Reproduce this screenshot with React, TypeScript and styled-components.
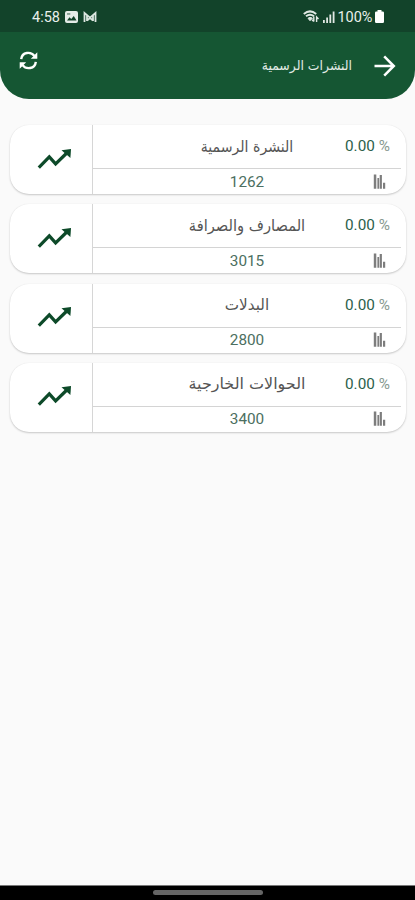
import React from 'react';
import styled, { createGlobalStyle } from 'styled-components';

const GlobalStyle = createGlobalStyle`
  * { box-sizing: border-box; }
  body { margin: 0; background: #fafafa; font-family: Roboto, "DejaVu Sans", sans-serif; }
`;

const Screen = styled.div`
  width: 415px;
  height: 900px;
  display: flex;
  flex-direction: column;
  overflow: hidden;
  background: #fafafa;
`;

const StatusBar = styled.div`
  height: 32px;
  flex: none;
  display: flex;
  align-items: center;
  justify-content: space-between;
  padding: 1px 31px 0 32px;
  background: #12432a;
  color: #e9f0ec;
  font-size: 14.5px;
`;

const StatusGroup = styled.div<{ $gap: number }>`
  display: flex;
  align-items: center;
  gap: ${(p) => p.$gap}px;
  svg { display: block; }
  span { padding-top: 1px; }
`;

const Header = styled.header`
  height: 67px;
  flex: none;
  display: flex;
  align-items: flex-start;
  padding: 0 19px;
  background: #155633;
  border-radius: 0 0 29px 29px;
`;

const IconButton = styled.button<{ $top: number }>`
  flex: none;
  margin: ${(p) => p.$top}px 0 0;
  padding: 0;
  border: 0;
  background: none;
  color: #fff;
  svg { display: block; }
`;

const Title = styled.h1`
  flex: 1;
  margin: 24px 22px 0 0;
  font-family: "DejaVu Sans", sans-serif;
  font-size: 13px;
  line-height: 20px;
  font-weight: 400;
  text-align: right;
  color: #e3ece6;
  white-space: nowrap;
  transform: scaleX(0.957);
  transform-origin: right center;
`;

const List = styled.main`
  flex: 1;
  display: flex;
  flex-direction: column;
  gap: 10.3px;
  padding: 26px 9px 0 10px;
`;

const Card = styled.article`
  height: 69px;
  flex: none;
  display: flex;
  background: #fff;
  border-radius: 19px;
  box-shadow: 0 1px 2px rgba(0, 0, 0, 0.2), 0 0 1px rgba(0, 0, 0, 0.08);
`;

const TrendCell = styled.div`
  width: 83px;
  flex: none;
  display: flex;
  align-items: center;
  padding: 0 0 2px 27px;
  border-right: 1px solid #d6d6d6;
`;

const Details = styled.div`
  flex: 1;
  display: flex;
  flex-direction: column;
  padding-right: 5px;
`;

const Row = styled.div<{ $height: number; $line?: boolean }>`
  height: ${(p) => p.$height}px;
  display: grid;
  grid-template-columns: 1fr 56px;
  padding-left: 56px;
  align-items: center;
  border-bottom: ${(p) => (p.$line ? '1px solid #d4d4d4' : '0')};
`;

const Name = styled.h2<{ $stretch: number }>`
  margin: 0;
  text-align: center;
  font-family: "DejaVu Sans", sans-serif;
  font-size: 15.5px;
  line-height: 22px;
  font-weight: 400;
  color: #555;
  white-space: nowrap;
  transform: scaleX(${(p) => p.$stretch});
`;

const Price = styled.div`
  text-align: center;
  font-size: 15.3px;
  line-height: 20px;
  color: #4c6f61;
`;

const Change = styled.div`
  padding-bottom: 1px;
  font-size: 15.3px;
  line-height: 20px;
  color: #2c5f4b;
  white-space: nowrap;
  span { color: #879990; }
`;

const ChartSlot = styled.div`
  padding-left: 28px;
  svg { display: block; }
`;

const NavBar = styled.footer`
  height: 15px;
  flex: none;
  display: flex;
  justify-content: center;
  padding-top: 4px;
  background: #000;
  border-top: 1px solid #777;
`;

const Handle = styled.div`
  width: 110px;
  height: 5px;
  border-radius: 3px;
  background: #656565;
`;

const PhotoIcon = () => (
  <svg width="13" height="12" viewBox="0 0 13 12">
    <rect width="13" height="12" rx="2" fill="#e4ebe7" />
    <path d="M2 9.4 4.5 6.3l1.7 1.8 2.6-3 2.7 4.3z" fill="#12432a" />
    <path d="M2 2.2h3.3v1.5H2z" fill="#12432a" opacity=".55" />
  </svg>
);

const MailIcon = () => (
  <svg width="14" height="12" viewBox="0 0 14 12">
    <path d="M1.5 11V2l5.5 4.6L12.5 2v9M4 10V4.5M10 10V4.5M4 9.5l3-2.5 3 2.5" fill="none" stroke="#dce6e0" strokeWidth="1.8" />
  </svg>
);

const WifiIcon = () => (
  <svg width="17" height="13" viewBox="0 0 17 13" fill="none" stroke="#e0e8e3">
    <path d="M.8 4q6.2-5.2 12.4 0M3 6.3q4-3.2 8 0" strokeWidth="2" />
    <path d="m5 8.3 2 2.4 2.4-2.5Q7 6.5 5 8.3z" fill="#e0e8e3" />
    <path d="M10.8 6.5v5M9 9.7l1.8 1.9M13.6 12V7l1.9 2" strokeWidth="1.4" />
  </svg>
);

const SignalIcon = () => (
  <svg width="12" height="12" viewBox="0 0 12 12" fill="#e0e8e3">
    <path d="M0 9h1.8v3H0zM3.2 6.5H5V12H3.2zM6.4 3.5h1.8V12H6.4zM9.7.5h1.8V12H9.7z" />
  </svg>
);

const BatteryIcon = () => (
  <svg width="9" height="13" viewBox="0 0 9 13">
    <path d="M2.5 0h4v1.5h1.2q1.3 0 1.3 1.3v8.9Q9 13 7.7 13H1.3Q0 13 0 11.7V2.8q0-1.3 1.3-1.3h1.2z" fill="#fff" />
  </svg>
);

const RefreshIcon = () => (
  <svg width="19" height="19" viewBox="0 0 19 19" fill="none" stroke="#fff" strokeWidth="2.4">
    <path d="M2.2 8.2C3 .7 12 .3 15.4 4.9M16.8 10.8C16 18.3 7 18.7 3.6 14.1" />
    <path d="M18.3 1.3v6.5h-6.5zM.7 17.7v-6.5h6.5z" fill="#fff" stroke="none" />
  </svg>
);

const BackIcon = () => (
  <svg width="22" height="22" viewBox="0 0 22 22" fill="none" stroke="#fff" strokeWidth="2.5">
    <path d="M.5 11h19M10.2 1.4 19.8 11l-9.6 9.6" />
  </svg>
);

const TrendIcon = () => (
  <svg width="35" height="22" viewBox="0 0 35 22">
    <path d="m1.8 19.6 10.5-10.7 6.3 7L29.8 5" fill="none" stroke="#0d4a29" strokeWidth="3.2" />
    <path d="M24.5 2.3 34 .9 33.4 10z" fill="#0d4a29" />
  </svg>
);

const ChartIcon = () => (
  <svg width="13" height="16" viewBox="0 0 13 16" fill="#7d7d7d">
    <path d="M.8.5h2.5v14.2H.8zM4.4 4h1.7v10.7H4.4zM6.7 1h2.2v13.7H6.7zM10 8.7h2.2v6H10z" />
  </svg>
);

const bulletins = [
  { name: 'النشرة الرسمية', price: '1262', stretch: 0.91 },
  { name: 'المصارف والصرافة', price: '3015', stretch: 0.945 },
  { name: 'البدلات', price: '2800', stretch: 0.98 },
  { name: 'الحوالات الخارجية', price: '3400', stretch: 1.03 },
];

export default function App() {
  return (
    <>
      <GlobalStyle />
      <Screen>
        <StatusBar>
          <StatusGroup $gap={5}>
            <span>4:58</span>
            <PhotoIcon />
            <MailIcon />
          </StatusGroup>
          <StatusGroup $gap={2.5}>
            <WifiIcon />
            <SignalIcon />
            <span>100%</span>
            <BatteryIcon />
          </StatusGroup>
        </StatusBar>
        <Header>
          <IconButton $top={19} aria-label="تحديث"><RefreshIcon /></IconButton>
          <Title dir="rtl">النشرات الرسمية</Title>
          <IconButton $top={23} aria-label="رجوع"><BackIcon /></IconButton>
        </Header>
        <List>
          {bulletins.map((b) => (
            <Card key={b.price}>
              <TrendCell><TrendIcon /></TrendCell>
              <Details>
                <Row $height={44} $line>
                  <Name dir="rtl" $stretch={b.stretch}>{b.name}</Name>
                  <Change>0.00 <span>%</span></Change>
                </Row>
                <Row $height={25}>
                  <Price>{b.price}</Price>
                  <ChartSlot><ChartIcon /></ChartSlot>
                </Row>
              </Details>
            </Card>
          ))}
        </List>
        <NavBar><Handle /></NavBar>
      </Screen>
    </>
  );
}
